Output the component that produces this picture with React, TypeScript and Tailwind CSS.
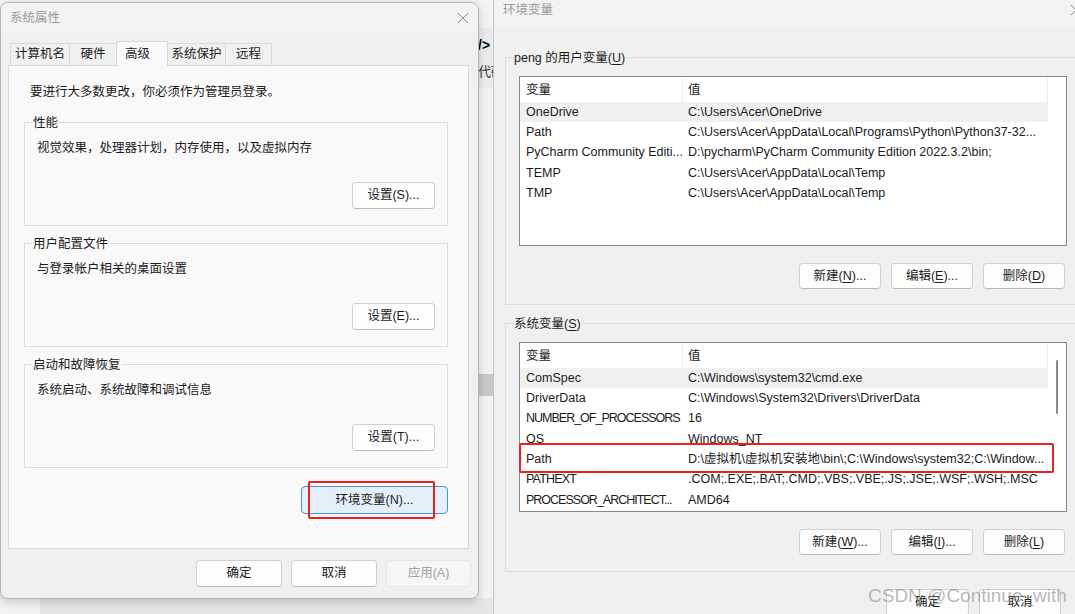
import React from 'react';

const userVars = [
    ['OneDrive', 'C:\\Users\\Acer\\OneDrive'],
    ['Path', 'C:\\Users\\Acer\\AppData\\Local\\Programs\\Python\\Python37-32...'],
    ['PyCharm Community Editi...', 'D:\\pycharm\\PyCharm Community Edition 2022.3.2\\bin;'],
    ['TEMP', 'C:\\Users\\Acer\\AppData\\Local\\Temp'],
    ['TMP', 'C:\\Users\\Acer\\AppData\\Local\\Temp'],
];

const sysVars = [
    ['ComSpec', 'C:\\Windows\\system32\\cmd.exe'],
    ['DriverData', 'C:\\Windows\\System32\\Drivers\\DriverData'],
    ['NUMBER_OF_PROCESSORS', '16'],
    ['OS', 'Windows_NT'],
    ['Path', 'D:\\虚拟机\\虚拟机安装地\\bin\\;C:\\Windows\\system32;C:\\Window...'],
    ['PATHEXT', '.COM;.EXE;.BAT;.CMD;.VBS;.VBE;.JS;.JSE;.WSF;.WSH;.MSC'],
    ['PROCESSOR_ARCHITECT...', 'AMD64'],
];

function CloseIcon() {
    return (
        <svg width="12" height="12" viewBox="0 0 12 12" className="shrink-0">
            <path d="M1 1L11 11M11 1L1 11" stroke="#8c8c8c" strokeWidth="1" fill="none" />
        </svg>
    );
}

function Btn({ children, w, h = 'h-[27px]' }: { children: React.ReactNode; w: string; h?: string }) {
    return (
        <div className={`${w} ${h} shrink-0 flex items-center justify-center rounded-[4px] border border-[#d0d0d0] border-b-[#bcbcbc] bg-[#fdfdfd] text-[#1b1b1b]`}>
            {children}
        </div>
    );
}

function U({ k }: { k: string }) {
    return <span className="underline underline-offset-2">{k}</span>;
}

function Group({ label, text, btn }: { label: string; text: string; btn: string }) {
    return (
        <div className="relative h-[104px] border border-[#dcdcdc] flex flex-col">
            <span className="absolute left-[7px] top-[-8px] px-[1px] leading-[16px] bg-[#f9f9f9]">{label}</span>
            <p className="pl-[12px] pt-[17px] leading-[16px]">{text}</p>
            <div className="self-end mr-[12px] mt-[26px]">
                <Btn w="w-[83px]">{btn}</Btn>
            </div>
        </div>
    );
}

function VarList({ rows, scroll }: { rows: string[][]; scroll?: boolean }) {
    return (
        <div className="w-[548px] h-[170px] border border-[#8a8a8a] bg-white flex">
            <div className="w-[528px] flex flex-col">
                <div className="flex h-[24px] mt-[1px]">
                    <div className="w-[162px] pl-[6px] flex items-center">变量</div>
                    <div className="w-[366px] pl-[5px] flex items-center border-l border-r border-[#ececec]">值</div>
                </div>
                {rows.map((r, i) => {
                    // all-caps names run wide in this font, pull them in a little
                    const caps = /^[A-Z_.]{5,}$/.test(r[0]);
                    const tight = caps ? (r[0].length >= 20 ? 'tracking-[-1px]' : 'tracking-[-0.8px]') : '';
                    return (
                        <div key={r[0]} className={`flex h-[20.3px] items-center whitespace-nowrap overflow-hidden ${i === 0 ? 'bg-[#f0f0f0]' : ''}`}>
                            <div className={`w-[162px] pl-[6px] overflow-hidden ${tight}`}>{r[0]}</div>
                            <div className="w-[366px] pl-[6px] overflow-hidden">{r[1]}</div>
                        </div>
                    );
                })}
            </div>
            {scroll && (
                <div className="w-[18px] pl-[8px] pt-[17px]">
                    <div className="w-[2px] h-[54px] rounded-full bg-[#8a8a8a]" />
                </div>
            )}
        </div>
    );
}

export default function App() {
    return (
        <div className="relative w-[1075px] h-[614px] overflow-hidden bg-[#f3f3f3] text-[12.5px] text-[#1b1b1b] font-['Liberation_Sans','Noto_Sans_CJK_SC',sans-serif]">
            {/* page behind the windows */}
            <div className="absolute left-[478px] top-[28px] w-[16px] h-[60px] bg-[#ebebeb] overflow-hidden whitespace-nowrap">
                <div className="mt-[9px] font-bold text-[14px] leading-[16px] text-black">/&gt;</div>
                <div className="mt-[11px] text-[13px] leading-[16px] text-[#333]">代码</div>
            </div>
            <div className="absolute left-[478px] top-[374px] w-[16px] h-[22px] bg-[#c8c8c8]" />
            <div className="absolute left-[40px] top-[598px] w-[453px] h-[16px] bg-[#e6e6e6]" />

            {/* 系统属性 */}
            <div className="absolute left-0 top-[2px] w-[479px] h-[597px] rounded-[8px] border border-[#b5b5b5] bg-[#f0f0f0] shadow-[0_3px_10px_rgba(0,0,0,0.18)] flex flex-col overflow-hidden">
                <div className="h-[30px] shrink-0 flex items-center justify-between pl-[9px] pr-[9px] bg-[#f3f3f3]">
                    <span className="text-[#9a9a9a]">系统属性</span>
                    <CloseIcon />
                </div>
                <div className="flex items-end h-[32px] pl-[9px] pt-[8px] shrink-0">
                    <div className="w-[60px] h-[22px] flex items-center justify-center border border-b-0 border-[#d9d9d9] bg-[#f0f0f0]">计算机名</div>
                    <div className="w-[48px] h-[22px] -ml-px flex items-center justify-center border border-b-0 border-[#d9d9d9] bg-[#f0f0f0]">硬件</div>
                    <div className="relative z-10 w-[52px] h-[25px] -ml-px -mb-px flex items-start pt-[3px] pl-[8px] border border-b-0 border-[#d9d9d9] bg-[#f9f9f9]">高级</div>
                    <div className="w-[59px] h-[22px] -ml-px flex items-center justify-center border border-b-0 border-[#d9d9d9] bg-[#f0f0f0]">系统保护</div>
                    <div className="w-[47px] h-[22px] -ml-px flex items-center justify-center border border-b-0 border-[#d9d9d9] bg-[#f0f0f0]">远程</div>
                </div>
                <div className="ml-[7px] w-[461px] h-[484px] shrink-0 border border-[#d9d9d9] bg-[#f9f9f9] flex flex-col">
                    <p className="mt-[18px] ml-[21px] leading-[16px]">要进行大多数更改，你必须作为管理员登录。</p>
                    <div className="ml-[15px] w-[424px] mt-[22px] flex flex-col">
                        <Group label="性能" text="视觉效果，处理器计划，内存使用，以及虚拟内存" btn="设置(S)..." />
                        <div className="mt-[17px]">
                            <Group label="用户配置文件" text="与登录帐户相关的桌面设置" btn="设置(E)..." />
                        </div>
                        <div className="mt-[17px]">
                            <Group label="启动和故障恢复" text="系统启动、系统故障和调试信息" btn="设置(T)..." />
                        </div>
                        <div className="self-end mt-[18px] w-[147px] h-[28px] flex items-center justify-center rounded-[4px] border border-[#4f8fd2] bg-[#e3effa]">
                            环境变量(N)...
                        </div>
                    </div>
                </div>
                <div className="flex justify-end gap-[9px] pr-[7px] mt-[11px]">
                    <Btn w="w-[86px]">确定</Btn>
                    <Btn w="w-[86px]">取消</Btn>
                    <div className="w-[85px] h-[27px] flex items-center justify-center rounded-[4px] border border-[#e6e6e6] bg-[#f6f6f6] text-[#a3a3a3]">应用(A)</div>
                </div>
            </div>

            {/* 环境变量 */}
            <div className="absolute left-[493px] top-[-7px] w-[620px] h-[640px] border border-[#c4c4c4] bg-[#f0f0f0] flex flex-col">
                <div className="h-[32px] shrink-0 flex items-center justify-between pl-[9px] pr-[30px] bg-[#f3f3f3]">
                    <span className="text-[#9a9a9a]">环境变量</span>
                    <CloseIcon />
                </div>
                <div className="relative ml-[11px] mt-[31px] w-[590px] h-[248px] shrink-0 border border-[#dcdcdc] flex flex-col">
                    <span className="absolute left-[7px] top-[-8px] px-[1px] leading-[16px] bg-[#f0f0f0]">peng 的用户变量(<U k="U" />)</span>
                    <div className="ml-[13px] mt-[18px]">
                        <VarList rows={userVars} />
                    </div>
                    <div className="ml-[13px] w-[548px] pr-[2px] mt-[17px] flex justify-end gap-[10px]">
                        <Btn w="w-[82px]" h="h-[26px]">新建(<U k="N" />)...</Btn>
                        <Btn w="w-[82px]" h="h-[26px]">编辑(<U k="E" />)...</Btn>
                        <Btn w="w-[82px]" h="h-[26px]">删除(<U k="D" />)</Btn>
                    </div>
                </div>
                <div className="relative ml-[11px] mt-[18px] w-[590px] h-[249px] shrink-0 border border-[#dcdcdc] flex flex-col">
                    <span className="absolute left-[7px] top-[-8px] px-[1px] leading-[16px] bg-[#f0f0f0]">系统变量(<U k="S" />)</span>
                    <div className="ml-[13px] mt-[18px]">
                        <VarList rows={sysVars} scroll />
                    </div>
                    <div className="ml-[13px] w-[548px] pr-[2px] mt-[17px] flex justify-end gap-[10px]">
                        <Btn w="w-[82px]" h="h-[26px]">新建(<U k="W" />)...</Btn>
                        <Btn w="w-[82px]" h="h-[26px]">编辑(<U k="I" />)...</Btn>
                        <Btn w="w-[82px]" h="h-[26px]">删除(<U k="L" />)</Btn>
                    </div>
                </div>
                <div className="ml-[392px] mt-[17px] flex gap-[10px]">
                    <Btn w="w-[83px]">确定</Btn>
                    <Btn w="w-[82px]">取消</Btn>
                </div>
            </div>

            {/* annotations */}
            <div className="absolute left-[308px] top-[481px] w-[127px] h-[38px] border-2 border-[#e8231f] rounded-[2px]" />
            <div className="absolute left-[519px] top-[443px] w-[535px] h-[30px] border-2 border-[#e8231f] rounded-[2px]" />
            <div className="absolute left-[868px] top-[584px] text-[19px] leading-[24px] text-[rgba(140,140,140,0.6)] whitespace-nowrap">
                CSDN @Continue_with
            </div>
        </div>
    );
}
